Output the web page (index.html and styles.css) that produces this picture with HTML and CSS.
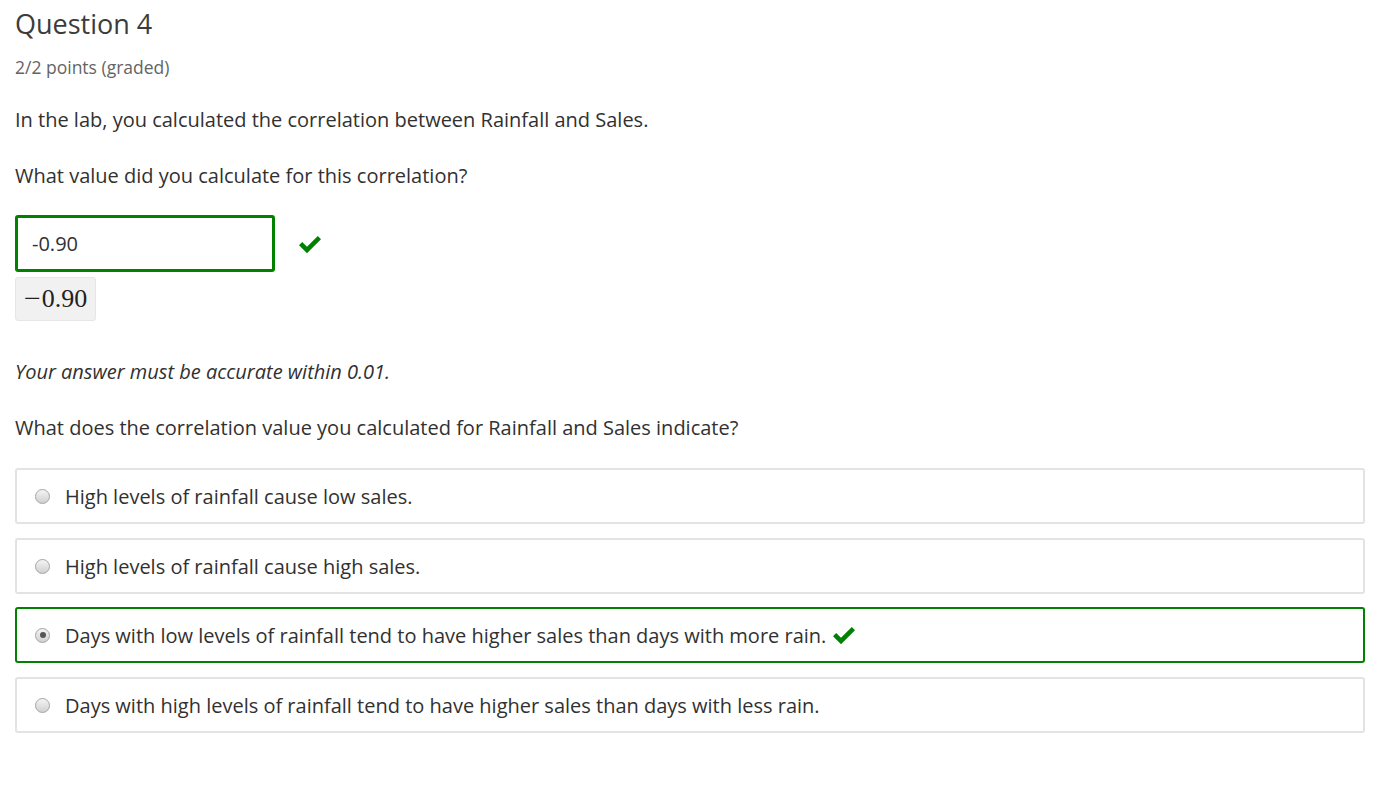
FILE: index.html
```html
<!DOCTYPE html>
<html>
<head>
<meta charset="utf-8">
<link rel="stylesheet" href="styles.css">
</head>
<body>
<div class="problem">
  <h2 class="title">Question 4</h2>
  <div class="points">2/2 points (graded)</div>
  <p class="para p1">In the lab, you calculated the correlation between Rainfall and Sales.</p>
  <p class="para p2">What value did you calculate for this correlation?</p>
  <div class="answer-row">
    <div class="input-box">-0.90</div>
    <svg class="check big" viewBox="0 0 22 17" width="22" height="17"><path d="M0 9.2 L3.2 6 L8 10.8 L18.8 0 L22 3.2 L8 17.2 Z" fill="#008100"/></svg>
  </div>
  <div class="math"><span class="minus">−</span>0.90</div>
  <p class="hint">Your answer must be accurate within 0.01.</p>
  <p class="para p3">What does the correlation value you calculated for Rainfall and Sales indicate?</p>
  <div class="options">
    <label class="option"><span class="radio"></span><span class="otext">High levels of rainfall cause low sales.</span></label>
    <label class="option"><span class="radio"></span><span class="otext">High levels of rainfall cause high sales.</span></label>
    <label class="option correct"><span class="radio checked"></span><span class="otext">Days with low levels of rainfall tend to have higher sales than days with more rain.</span><svg class="check small" viewBox="0 0 22 17" width="22" height="17"><path d="M0 9.2 L3.2 6 L8 10.8 L18.8 0 L22 3.2 L8 17.2 Z" fill="#008100"/></svg></label>
    <label class="option"><span class="radio"></span><span class="otext">Days with high levels of rainfall tend to have higher sales than days with less rain.</span></label>
  </div>
</div>
</body>
</html>
```
FILE: styles.css
```css
html, body { margin: 0; padding: 0; background: #fff; }
body { font-family: "Open Sans", "Liberation Sans", sans-serif; color: #313131; }
.problem { padding: 6px 20px 0 15px; }
.title { margin: 0; font-weight: 400; font-size: 27px; line-height: 36px; color: #3c3c3c; }
.points { margin-top: 14px; font-size: 17.5px; line-height: 22px; color: #646464; }
.para { margin: 0; font-size: 20px; line-height: 28px; color: #313131; }
.p1 { margin-top: 28px; }
.p2 { margin-top: 28px; }
.answer-row { display: flex; align-items: center; margin-top: 25px; }
.input-box { box-sizing: border-box; width: 260px; height: 57px; border: 3px solid #008100; border-radius: 3px; padding: 0 14px; font-size: 20px; line-height: 51px; color: #313131; }
.check.big { margin-left: 24px; margin-top: 2px; }
.math { display: block; width: fit-content; margin-top: 5px; background: #f1f1f1; border: 1px solid #e6e6e6; border-radius: 3px; padding: 0 8px 0 9px; height: 44px; box-sizing: border-box; font-family: "Liberation Serif", "DejaVu Serif", serif; font-size: 26px; line-height: 42px; color: #222; }
.math .minus { display: inline-block; transform: scaleX(1.15); margin-right: 2px; }
.hint { margin: 37px 0 0 0; font-style: italic; font-size: 20px; line-height: 28px; color: #313131; }
.p3 { margin-top: 28px; }
.options { display: flex; flex-direction: column; gap: 14px; margin-top: 26px; }
.option { box-sizing: border-box; height: 56px; border: 2px solid #e3e3e3; border-radius: 3px; display: flex; align-items: center; padding-left: 18px; font-size: 20px; color: #313131; }
.option.correct { border-color: #008100; margin-top: -1px; }
.radio { box-sizing: border-box; width: 15px; height: 15px; border-radius: 50%; border: 1px solid #a4a4a4; background: linear-gradient(#f4f4f4, #d0d0d0); margin-right: 15px; position: relative; flex: none; }
.radio.checked::after { content: ""; position: absolute; left: 3.5px; top: 3.5px; width: 6px; height: 6px; border-radius: 50%; background: #555; }
.check.small { margin-left: 7px; }
```
